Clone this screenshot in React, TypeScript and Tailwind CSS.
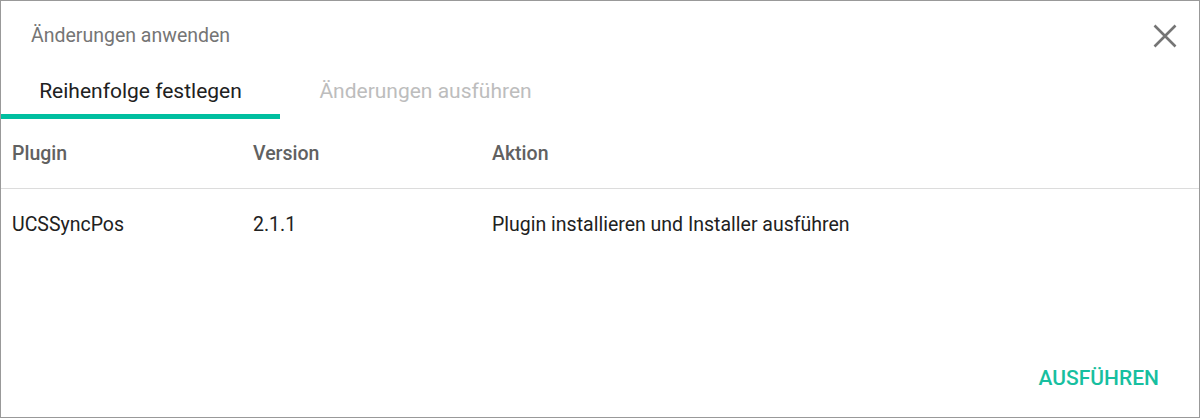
import { useState } from 'react';

const tabs = [
  { label: 'Reihenfolge festlegen', w: 'w-[279px]' },
  { label: 'Änderungen ausführen', w: 'w-[291px]' },
];

const rows = [
  { plugin: 'UCSSyncPos', version: '2.1.1', action: 'Plugin installieren und Installer ausführen' },
];

export default function App() {
  const [active] = useState(0);

  return (
    <div className="flex h-[418px] w-[1200px] flex-col border border-[#999999] bg-white font-['Roboto',sans-serif]">
      {/* header */}
      <div className="flex h-[69px] items-center justify-between pl-[30px] pr-[20px]">
        <span className="text-[19.5px] text-[#757575]">Änderungen anwenden</span>
        <button className="flex h-[28px] w-[28px] items-center justify-center">
          <svg width="24" height="24" viewBox="0 0 24 24" fill="none" stroke="#757575" strokeWidth="2.6">
            <path d="M1.5 1.5 L22.5 22.5 M22.5 1.5 L1.5 22.5" />
          </svg>
        </button>
      </div>

      {/* tabs */}
      <div className="flex h-[49px]">
        {tabs.map((t, i) => (
          <div
            key={t.label}
            className={
              'flex items-center justify-center border-b-[5px] text-[21px] ' +
              t.w +
              ' ' +
              (i === active ? 'border-[#00bfa0] text-[#212121]' : 'border-transparent text-[#bdbdbd]')
            }
          >
            {t.label}
          </div>
        ))}
      </div>

      {/* table */}
      <div className="grid h-[70px] grid-cols-[241px_239px_1fr] items-center border-b border-[#dcdcdc] px-[11px] text-[19.5px] font-medium text-[#616161]">
        <span>Plugin</span>
        <span>Version</span>
        <span>Aktion</span>
      </div>
      {rows.map((r) => (
        <div key={r.plugin} className="grid h-[71px] grid-cols-[241px_239px_1fr] items-center px-[11px] text-[19.5px] text-[#212121]">
          <span>{r.plugin}</span>
          <span>{r.version}</span>
          <span>{r.action}</span>
        </div>
      ))}

      <div className="flex-1" />

      {/* footer */}
      <div className="flex h-[78px] items-start justify-end pr-[40px] pt-[24px]">
        <button className="px-0 text-[21px] font-medium uppercase text-[#17bfa0]">Ausführen</button>
      </div>
    </div>
  );
}
